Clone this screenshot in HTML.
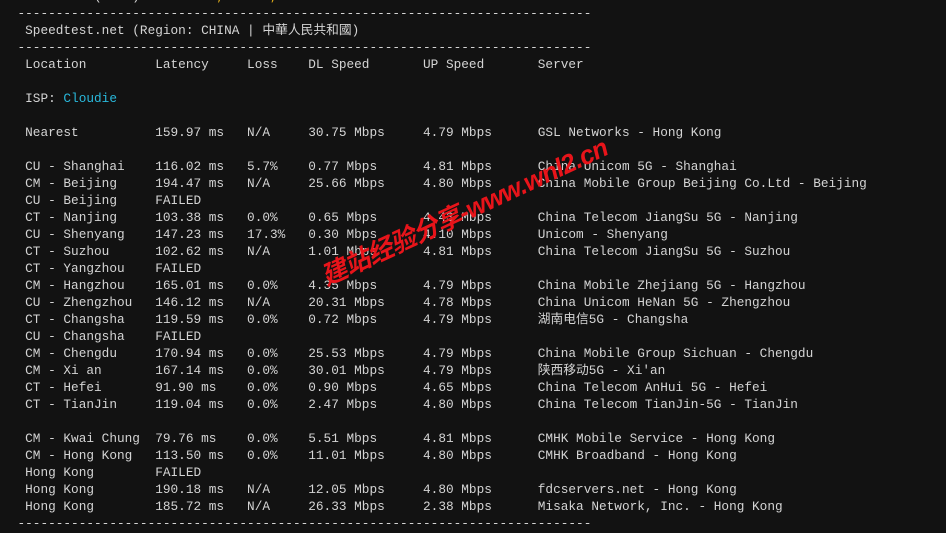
<!DOCTYPE html>
<html><head><meta charset="utf-8"><style>
html,body{margin:0;padding:0;width:946px;height:533px;overflow:hidden;background:#121212;}
pre{position:absolute;left:17.5px;top:-12px;margin:0;font-family:"Liberation Mono","Noto Sans CJK TC",monospace;font-size:12.75px;line-height:17px;color:#d4d4d4;}
.y{color:#e5b11a}.c{color:#29b8db}
.wm{position:absolute;transform:rotate(-25deg);transform-origin:left center;color:#e8141a;font-family:"Liberation Sans","Noto Sans CJK SC",sans-serif;font-weight:bold;font-style:italic;font-size:26px;white-space:nowrap;letter-spacing:-0.8px;}
</style></head><body>
<pre> Location (IPv4)   : <span class="y">Seoul, Seoul, KR</span>
---------------------------------------------------------------------------
 Speedtest.net (Region: CHINA | 中華人民共和國)
---------------------------------------------------------------------------
 Location         Latency     Loss    DL Speed       UP Speed       Server

 ISP: <span class="c">Cloudie</span>

 Nearest          159.97 ms   N/A     30.75 Mbps     4.79 Mbps      GSL Networks - Hong Kong

 CU - Shanghai    116.02 ms   5.7%    0.77 Mbps      4.81 Mbps      China Unicom 5G - Shanghai
 CM - Beijing     194.47 ms   N/A     25.66 Mbps     4.80 Mbps      China Mobile Group Beijing Co.Ltd - Beijing
 CU - Beijing     FAILED
 CT - Nanjing     103.38 ms   0.0%    0.65 Mbps      4.43 Mbps      China Telecom JiangSu 5G - Nanjing
 CU - Shenyang    147.23 ms   17.3%   0.30 Mbps      4.10 Mbps      Unicom - Shenyang
 CT - Suzhou      102.62 ms   N/A     1.01 Mbps      4.81 Mbps      China Telecom JiangSu 5G - Suzhou
 CT - Yangzhou    FAILED
 CM - Hangzhou    165.01 ms   0.0%    4.35 Mbps      4.79 Mbps      China Mobile Zhejiang 5G - Hangzhou
 CU - Zhengzhou   146.12 ms   N/A     20.31 Mbps     4.78 Mbps      China Unicom HeNan 5G - Zhengzhou
 CT - Changsha    119.59 ms   0.0%    0.72 Mbps      4.79 Mbps      湖南电信5G - Changsha
 CU - Changsha    FAILED
 CM - Chengdu     170.94 ms   0.0%    25.53 Mbps     4.79 Mbps      China Mobile Group Sichuan - Chengdu
 CM - Xi an       167.14 ms   0.0%    30.01 Mbps     4.79 Mbps      陕西移动5G - Xi'an
 CT - Hefei       91.90 ms    0.0%    0.90 Mbps      4.65 Mbps      China Telecom AnHui 5G - Hefei
 CT - TianJin     119.04 ms   0.0%    2.47 Mbps      4.80 Mbps      China Telecom TianJin-5G - TianJin

 CM - Kwai Chung  79.76 ms    0.0%    5.51 Mbps      4.81 Mbps      CMHK Mobile Service - Hong Kong
 CM - Hong Kong   113.50 ms   0.0%    11.01 Mbps     4.80 Mbps      CMHK Broadband - Hong Kong
 Hong Kong        FAILED
 Hong Kong        190.18 ms   N/A     12.05 Mbps     4.80 Mbps      fdcservers.net - Hong Kong
 Hong Kong        185.72 ms   N/A     26.33 Mbps     2.38 Mbps      Misaka Network, Inc. - Hong Kong
---------------------------------------------------------------------------</pre>
<div class="wm" style="top:258px;left:322px;">建站经验分享-www.wnl2.cn</div>
</body></html>
